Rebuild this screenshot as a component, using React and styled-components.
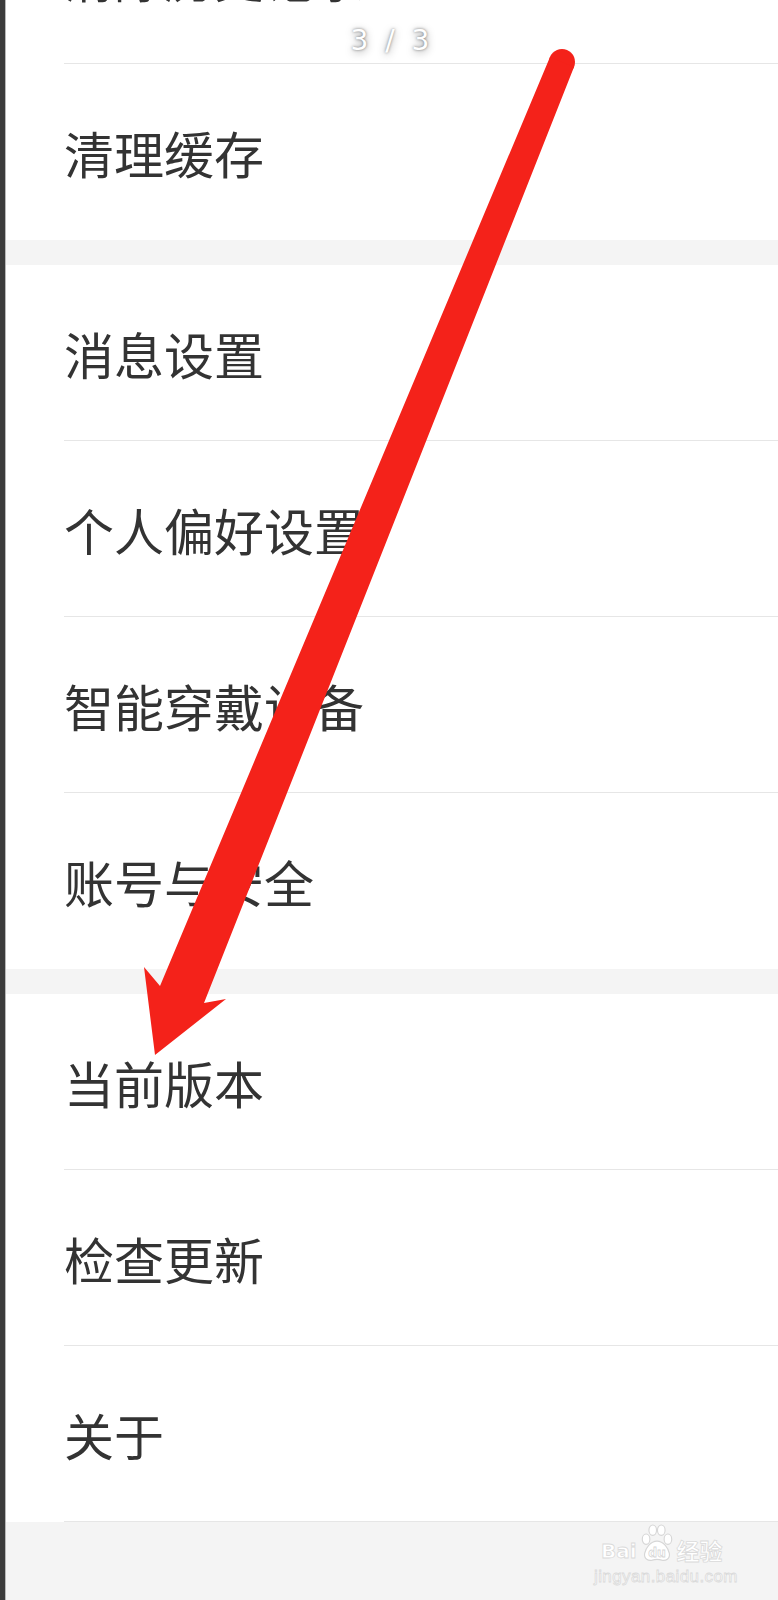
import React from 'react';
import styled, { createGlobalStyle } from 'styled-components';

const Global = createGlobalStyle`
  html, body { margin: 0; padding: 0; background: #f4f4f4; }
  body { font-family: "Noto Sans CJK SC", "Noto Sans", sans-serif; }
`;

const Screen = styled.div`
  position: relative;
  display: flex;
  width: 778px;
  height: 1600px;
  overflow: hidden;
  background: #f4f4f4;
`;

const EdgeStrip = styled.div`
  flex: 0 0 5px;
  background: #3b3b3b;
  border-right: 1px solid #b8b8b8;
`;

const Content = styled.div`
  flex: 1;
  display: flex;
  flex-direction: column;
  gap: 25px;
  margin-top: -112px;
`;

const Group = styled.section`
  background: #fff;
`;

const Row = styled.div`
  box-sizing: border-box;
  height: 176px;
  margin-left: 58px;
  display: flex;
  align-items: center;
  border-bottom: ${p => (p.$divider ? '1px solid #e6e6e6' : 'none')};
  font-size: 50px;
  line-height: 72px;
  color: #333;
  white-space: nowrap;
`;

const PageIndicator = styled.div`
  position: absolute;
  top: 24px;
  left: 0;
  right: 0;
  text-align: center;
  padding-left: 6px;
  font-family: "DejaVu Sans", sans-serif;
  font-weight: 400;
  font-size: 28px;
  letter-spacing: 4px;
  color: #fff;
  text-shadow: 0 0 3px rgba(0, 0, 0, 0.5), 0 2px 8px rgba(0, 0, 0, 0.4);
`;

const ArrowLayer = styled.svg`
  position: absolute;
  left: 0;
  top: 0;
  pointer-events: none;
`;

const Watermark = styled.div`
  position: absolute;
  left: 594px;
  top: 1524px;
  display: flex;
  flex-direction: column;
  align-items: flex-start;
  color: #fff;
  -webkit-text-stroke: 0.8px #dadada;
`;

const MarkTop = styled.div`
  display: flex;
  align-items: flex-end;
  gap: 3px;
  height: 38px;
`;

const MarkWord = styled.span`
  font-family: "DejaVu Sans", sans-serif;
  font-weight: 700;
  font-size: 20px;
  line-height: 1;
  margin-bottom: 1px;
  margin-left: 7px;
`;

const MarkCn = styled.span`
  font-family: "Noto Sans CJK SC", sans-serif;
  font-weight: 700;
  font-size: 23px;
  line-height: 1;
`;

const MarkUrl = styled.span`
  font-family: "Liberation Sans", Arial, sans-serif;
  font-size: 17px;
  line-height: 1;
  margin-top: 6px;
  letter-spacing: 0.4px;
`;

function Paw() {
  return (
    <svg width="34" height="38" viewBox="0 0 34 40">
      <g fill="#fff" stroke="#d6d6d6" strokeWidth="1.2">
        <ellipse cx="5.5" cy="16" rx="4" ry="5.5" />
        <ellipse cx="12.5" cy="6.5" rx="4" ry="5.5" />
        <ellipse cx="21.5" cy="6.5" rx="4" ry="5.5" />
        <ellipse cx="28.5" cy="16" rx="4" ry="5.5" />
        <path d="M17 18 C10 18 5 26 4 31 C3 37 8 39 12 38 C15 37 19 37 22 38 C26 39 31 37 30 31 C29 26 24 18 17 18 Z" />
      </g>
      <text x="17" y="35" textAnchor="middle" fontFamily="DejaVu Sans, sans-serif" fontWeight="700" fontSize="13" fill="#fff" stroke="#d6d6d6" strokeWidth="0.8">du</text>
    </svg>
  );
}

const sections = [
  [{ label: '清除历史记录' }, { label: '清理缓存' }],
  [
    { label: '消息设置' },
    { label: '个人偏好设置' },
    { label: '智能穿戴设备' },
    { label: '账号与安全' },
  ],
  [{ label: '当前版本' }, { label: '检查更新' }, { label: '关于', last: true }],
];

export default function App() {
  return (
    <>
      <Global />
      <Screen>
        <EdgeStrip />
        <Content>
          {sections.map((items, gi) => (
            <Group key={gi}>
              {items.map((item, i) => (
                <Row key={item.label} $divider={i < items.length - 1 || item.last}>
                  {item.label}
                </Row>
              ))}
            </Group>
          ))}
        </Content>
        <PageIndicator>3 / 3</PageIndicator>
        <ArrowLayer width="778" height="1600" viewBox="0 0 778 1600">
          <g fill="#f4221a">
            <circle cx="562" cy="62" r="13" />
            <polygon points="550,57.1 160,986 144,967 155,1055 226,999 204,1003 574,66.9" />
          </g>
        </ArrowLayer>
        <Watermark>
          <MarkTop>
            <MarkWord>Bai</MarkWord>
            <Paw />
            <MarkCn>经验</MarkCn>
          </MarkTop>
          <MarkUrl>jingyan.baidu.com</MarkUrl>
        </Watermark>
      </Screen>
    </>
  );
}
